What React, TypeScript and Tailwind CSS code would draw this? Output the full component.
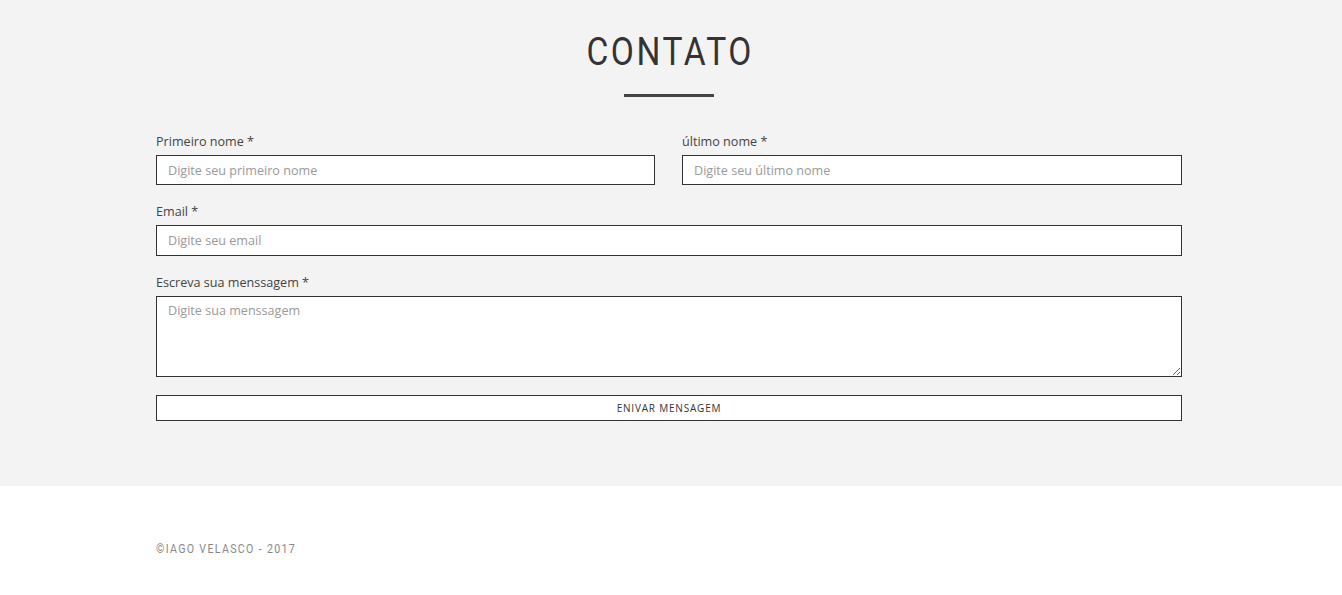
export default function App() {
  const label = "block text-[12.6px] leading-[18px] text-[#444] mb-[4px]";
  const input =
    "block w-full h-[30px] border border-[#333] bg-white px-[11px] text-[12.6px] text-[#333] placeholder:text-[#999] outline-none";
  return (
    <div className="min-h-[595px] bg-white" style={{ fontFamily: "'Open Sans', sans-serif" }}>
      <section className="bg-[#f3f3f3] h-[486px] pt-[30px]">
        <div className="flex flex-col items-center pr-[5px]">
          <h2
            className="text-[39px] leading-[44px] tracking-[3px] text-[#333] pl-[3px] scale-x-[0.86]"
            style={{ fontFamily: "Roboto, sans-serif" }}
          >
            CONTATO
          </h2>
          <div className="w-[90px] h-[3px] bg-[#444] mt-[20px] ml-[1px]" />
        </div>
        <form className="w-[1026px] ml-[156px] mt-[36px]">
          <div className="flex gap-[27px]">
            <div className="w-[499px]">
              <label className={label}>Primeiro nome *</label>
              <input className={input} placeholder="Digite seu primeiro nome" />
            </div>
            <div className="flex-1">
              <label className={label}>último nome *</label>
              <input className={input} placeholder="Digite seu último nome" />
            </div>
          </div>
          <div className="mt-[18px]">
            <label className={label}>Email *</label>
            <input className={input + " h-[31px]"} placeholder="Digite seu email" />
          </div>
          <div className="mt-[18px]">
            <label className={label}>Escreva sua menssagem *</label>
            <textarea
              className="block w-full h-[81px] border border-[#333] bg-white px-[11px] py-[5px] text-[12.6px] text-[#333] placeholder:text-[#999] outline-none"
              placeholder="Digite sua menssagem"
            />
          </div>
          <button
            type="button"
            className="block w-full h-[26px] mt-[18px] border border-[#333] bg-white text-[10px] tracking-[0.8px] text-[#333]"
          >
            ENIVAR MENSAGEM
          </button>
        </form>
      </section>
      <footer className="pt-[55px] pb-[32px]">
        <p
          className="ml-[156px] text-[12px] leading-[16px] tracking-[1.5px] text-[#888] origin-left scale-x-[0.885]"
          style={{ fontFamily: "Roboto, sans-serif" }}
        >
          ©IAGO VELASCO - 2017
        </p>
      </footer>
    </div>
  );
}
